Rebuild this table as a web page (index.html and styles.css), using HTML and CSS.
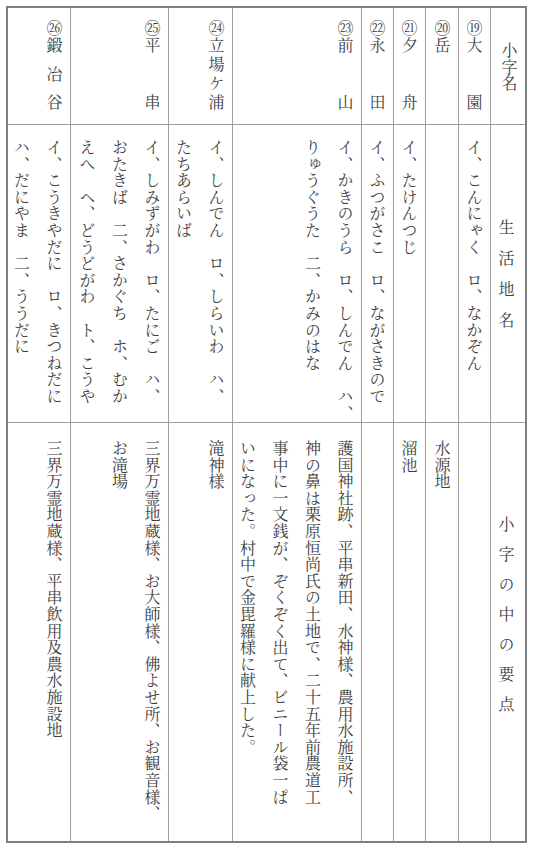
FILE: index.html
```html
<!DOCTYPE html>
<html lang="ja">
<head>
<meta charset="utf-8">
<title>小字名 一覧</title>
<link rel="stylesheet" href="styles.css">
</head>
<body>
<div class="page">
  <div class="sheet">
    <div class="cell head head-label">小字名</div>
    <div class="cell body title-a">生活地名</div>
    <div class="cell note title-b">小字の中の要点</div>

    <div class="cell head"><span class="num">⑲</span><span class="name">大園</span></div>
    <div class="cell body">イ、こんにゃく　ロ、なかぞん</div>
    <div class="cell note"></div>

    <div class="cell head"><span class="num">⑳</span><span class="name">岳</span></div>
    <div class="cell body"></div>
    <div class="cell note">水源地</div>

    <div class="cell head"><span class="num">㉑</span><span class="name">夕舟</span></div>
    <div class="cell body">イ、たけんつじ</div>
    <div class="cell note">溜池</div>

    <div class="cell head"><span class="num">㉒</span><span class="name">永田</span></div>
    <div class="cell body">イ、ふつがさこ　ロ、ながさきので</div>
    <div class="cell note"></div>

    <div class="cell head"><span class="num">㉓</span><span class="name">前山</span></div>
    <div class="cell body">イ、かきのうら　ロ、しんでん　ハ、<br>りゅうぐうた　二、かみのはな</div>
    <div class="cell note">護国神社跡、平串新田、水神様、農用水施設所、<br>神の鼻は栗原恒尚氏の土地で、二十五年前農道工<br>事中に一文銭が、ぞくぞく出て、ビニール袋一ぱ<br>いになった。村中で金毘羅様に献上した。</div>

    <div class="cell head"><span class="num">㉔</span><span class="name">立場ケ浦</span></div>
    <div class="cell body">イ、しんでん　ロ、しらいわ　ハ、<br>たちあらいば</div>
    <div class="cell note">滝神様</div>

    <div class="cell head"><span class="num">㉕</span><span class="name">平串</span></div>
    <div class="cell body">イ、しみずがわ　ロ、たにご　ハ、<br>おたきば　二、さかぐち　ホ、むか<br>えへ　ヘ、どうどがわ　ト、こうや</div>
    <div class="cell note">三界万霊地蔵様、お大師様、佛よせ所、お観音様、<br>お滝場</div>

    <div class="cell head"><span class="num">㉖</span><span class="name">鍛冶谷</span></div>
    <div class="cell body">イ、こうきやだに　ロ、きつねだに<br>ハ、だにやま　二、ううだに</div>
    <div class="cell note">三界万霊地蔵様、平串飲用及農水施設地</div>
  </div>
</div>
</body>
</html>
```

FILE: styles.css
```css
html, body {
  margin: 0;
  padding: 0;
  background: #ffffff;
}

.page {
  padding: 6px 0 0 6px;
}

.sheet {
  writing-mode: vertical-rl;
  display: grid;
  grid-template-columns: 116px 297px 418px;
  grid-template-rows: 34px 31px 32px 31px 31px 128px 63px 97px 62px;
  gap: 1px;
  width: 521px;
  height: 837px;
  box-sizing: border-box;
  border: 2px solid #7f7f7f;
  background: #9d9d9d;
  font-family: "Noto Serif CJK JP", "Noto Sans CJK JP", serif;
  font-size: 16px;
  line-height: 32.5px;
  letter-spacing: 0.6px;
  color: #3d3d3d;
}

.cell {
  background: #ffffff;
  white-space: nowrap;
}

.head {
  display: flex;
  padding: 12px 0 13px 0;
}

.num {
  font-size: 16px;
  letter-spacing: 0;
  margin-bottom: 1px;
}

.name {
  flex: 1;
  text-align: justify;
  text-align-last: justify;
}

.head-label {
  display: block;
  padding-top: 34px;
}

.body {
  padding-top: 14px;
}

.note {
  padding-top: 17px;
}

.title-a {
  padding: 15px 3px 0 0;
  text-align: center;
  letter-spacing: 15px;
}

.title-b {
  padding: 0 3px 22px 0;
  text-align: center;
  letter-spacing: 14px;
}
```
